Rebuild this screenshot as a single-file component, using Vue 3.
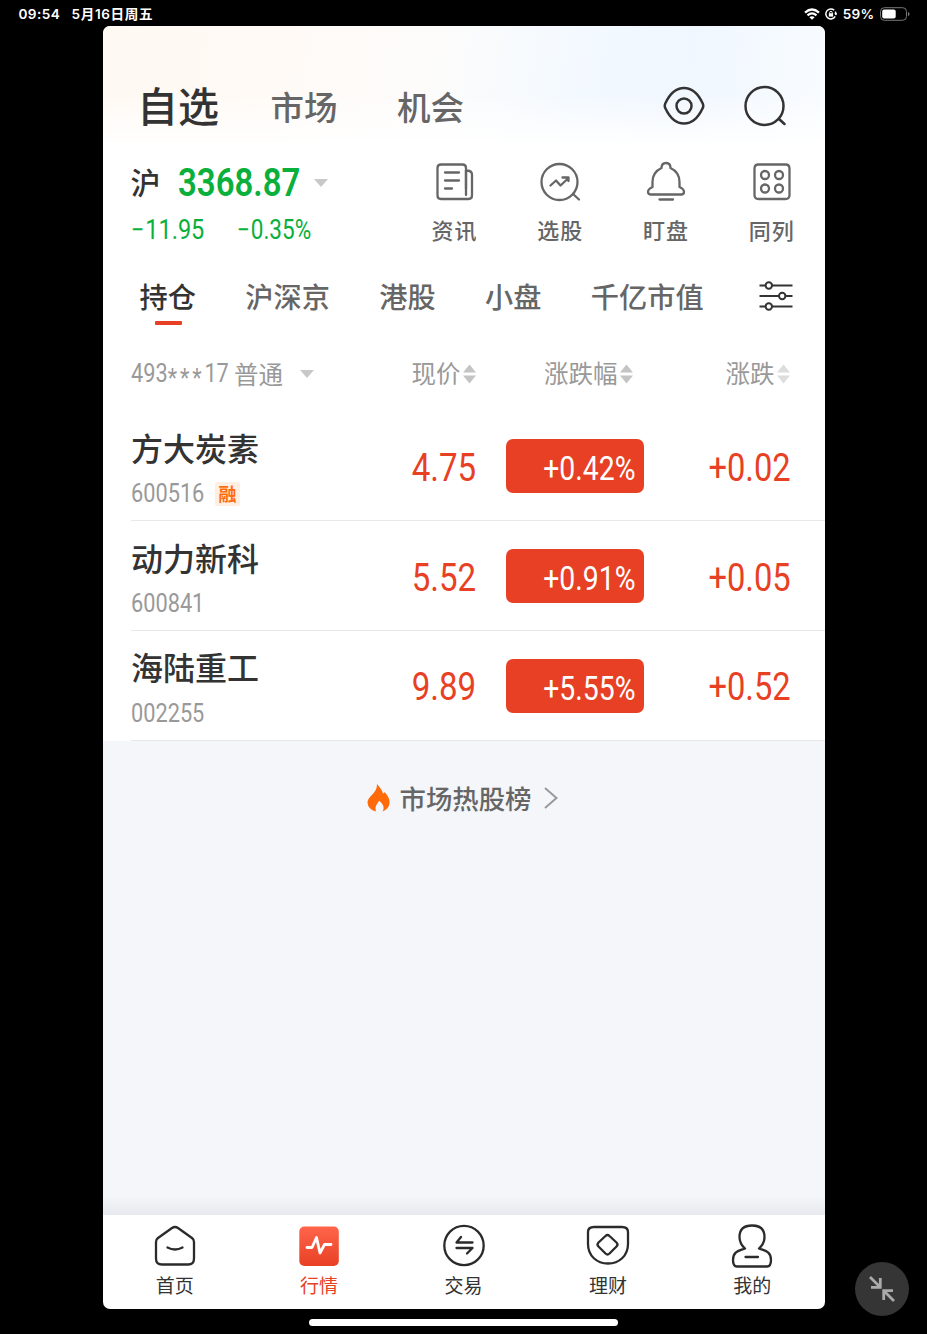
<template>
	<div class="screen">
		<div class="statusbar">
			<div class="clock"><span>09:54</span><span>5月16日周五</span></div>
			<div class="indicators">
				<svg width="16" height="12" viewBox="0 0 16 12" fill="none" stroke="#fff" stroke-width="2.2">
					<path d="M1 4.6Q8-1.6 15 4.6M3.5 7.4Q8 3.4 12.5 7.4" />
					<path d="M5.4 9.2Q8 7.2 10.6 9.2L8 11.8Z" fill="#fff" stroke="none" />
				</svg>
				<svg width="12" height="12" viewBox="0 0 12 12" fill="none" stroke="#fff" stroke-width="1.5">
					<path d="M9.2 2.2A5 5 0 1 0 10.2 8.4M10.7 7A5 5 0 0 0 10.3 3.6" />
					<path d="M9.2 5.2h3l-1.3 2z" fill="#fff" stroke="none" />
					<path d="M4.7 5.8V4.6a1.2 1.2 0 0 1 2.5 0V5.8" stroke-width="1" />
					<path d="M3.8 5.3h4.3v3.3H3.8z" fill="#fff" stroke="none" />
				</svg>
				<span class="percent">59%</span>
				<svg width="30" height="14" viewBox="0 0 30 14">
					<rect x=".5" y=".7" width="26" height="12.6" rx="3.8" fill="none" stroke="#777" />
					<rect x="2.2" y="2.5" width="13.5" height="9" rx="2" fill="#fff" />
					<path d="M28 5v4.2q1.6-.6 1.6-2.1T28 5z" fill="#777" />
				</svg>
			</div>
		</div>

		<main class="app">
			<header class="top">
				<nav class="sections">
					<span class="current">自选</span>
					<span>市场</span>
					<span>机会</span>
				</nav>
				<div class="tools">
					<svg width="42" height="42" viewBox="0 0 42 42" fill="none" stroke="#333" stroke-width="2.5">
						<path d="M2.5 18C7 8.500 13 3 21 3S35 8.500 39.500 18Q41 21 39.500 23.500C35 33 28 38.500 21 38.500S7 33 2.500 23.500Q1 21 2.500 18Z" />
						<circle cx="21" cy="21" r="7.500" />
					</svg>
					<svg width="42" height="42" viewBox="0 0 42 42" fill="none" stroke="#333" stroke-width="2.500" stroke-linecap="round">
						<circle cx="20.500" cy="21" r="19" />
						<path d="M35 34l5.500 5" />
					</svg>
				</div>
			</header>

			<section class="overview">
				<div class="index">
					<div class="line">
						<span class="market">沪</span>
						<span class="num point">3368.87</span>
						<i class="caret"></i>
					</div>
					<div class="line changes">
						<span class="num"><b>−</b>11.95</span>
						<span class="num"><b>−</b>0.35%</span>
					</div>
				</div>
				<div class="shortcuts">
					<div v-for="s in shortcuts" class="shortcut">
						<svg width="42" height="42" viewBox="0 0 42 42" fill="none" stroke="#666" stroke-width="2.3" stroke-linecap="round" stroke-linejoin="round">
							<path v-for="d in s.paths" :d="d" />
						</svg>
						<span>{{ s.name }}</span>
					</div>
				</div>
			</section>

			<nav class="groups">
				<span v-for="(g, i) in groups" :class="{ active: i === 0 }">{{ g }}</span>
				<svg width="34" height="30" viewBox="0 0 34 30" fill="none" stroke="#333" stroke-width="2">
					<path d="M.5 4.500H6.500M13 4.500H33.500M.5 15H20M26.500 15H33.500M.5 25.500H6.500M13 25.500H33.500" />
					<circle cx="9.800" cy="4.500" r="3.200" />
					<circle cx="23.200" cy="15" r="3.200" />
					<circle cx="9.800" cy="25.500" r="3.200" />
				</svg>
			</nav>

			<div class="thead">
				<div class="account">
					<span class="num">493<b>***</b>17</span><span>普通</span><i class="caret"></i>
				</div>
				<div v-for="c in columns" class="col">
					<span>{{ c }}</span>
					<svg width="13" height="20" viewBox="0 0 13 20"><path d="M6.500 .5l6.500 8H0zM6.500 19.500l6.500-8H0z" /></svg>
				</div>
			</div>

			<ul class="stocks">
				<li v-for="s in stocks">
					<div class="name">
						<strong>{{ s.name }}</strong>
						<div class="code"><span class="num">{{ s.code }}</span><em v-if="s.margin">融</em></div>
					</div>
					<div class="price"><span class="num">{{ s.price }}</span></div>
					<div class="rate"><span class="num">{{ s.rate }}</span></div>
					<div class="diff"><span class="num">{{ s.diff }}</span></div>
				</li>
			</ul>

			<div class="hot">
				<svg width="24" height="28" viewBox="0 0 24 28">
					<path d="M10 0C12.500 3 15 5.500 16 9.500Q17.500 9 17.500 8C21 12 23 15 22.500 19Q22 25 15.500 27.500Q19 22 12 16.500C12 19 7 21 9 27.500Q1 25.500 .500 18.500C.500 12 10.500 9.500 10 0Z" fill="#ff6a0a" />
				</svg>
				<span>市场热股榜</span>
				<svg width="14" height="22" viewBox="0 0 14 22" fill="none" stroke="#999" stroke-width="2"><path d="M1 1l11.500 10L1 21" /></svg>
			</div>

			<footer class="tabbar">
				<div class="tab">
					<svg viewBox="0 0 44 44"><path d="M3 18Q3 15.500 5 14L19 4Q22 2 25 4L39 14Q41 15.500 41 18V34.500Q41 40.500 35 40.500H9Q3 40.500 3 34.500ZM14.500 23.500Q22 27.500 29.500 23.500" /></svg>
					<span>首页</span>
				</div>
				<div class="tab on">
					<svg viewBox="0 0 44 44">
						<defs><linearGradient id="pulse" x2="0" y2="1"><stop stop-color="#ff654b" /><stop offset="1" stop-color="#e84024" /></linearGradient></defs>
						<rect x="2.300" y="2.500" width="39.500" height="39.500" rx="5" fill="url(#pulse)" stroke="none" />
						<path d="M10 23.500h5L19.500 13.500l3.500 15.500L27.500 20.500h6.500" stroke="#fff" stroke-width="2.800" />
					</svg>
					<span>行情</span>
				</div>
				<div class="tab">
					<svg viewBox="0 0 44 44"><circle cx="22" cy="21.500" r="19.700" /><path d="M30.500 18.500H14.500L19 13M14.500 24H30.500L25 29.500" /></svg>
					<span>交易</span>
				</div>
				<div class="tab">
					<svg viewBox="0 0 44 44"><path d="M8 3H36Q42 3 42 8V20C42 32 33 39.500 22 39.500S2 32 2 20V8Q2 3 8 3ZM19.500 12Q21.500 10 23.500 12L30.500 18.500Q32.500 20.500 30.500 22.500L23.500 29.500Q21.500 31.500 19.500 29.500L12.500 22.500Q10.500 20.500 12.500 18.500Z" /></svg>
					<span>理财</span>
				</div>
				<div class="tab">
					<svg viewBox="0 0 44 44"><path d="M15 24.500C11 21 9.500 17 9.500 13C9.500 5 14.500 1.500 22 1.500S34.500 5 34.500 13C34.500 17 33 21 29 24.500C34 26.500 41 27 41 36Q41 42.500 37 42.500H7Q3 42.500 3 36C3 27 10 26.500 15 24.500ZM15.500 33H28" /></svg>
					<span>我的</span>
				</div>
			</footer>
		</main>

		<div class="homebar"></div>
		<button class="shrink">
			<svg width="28" height="28" viewBox="0 0 28 28" fill="none" stroke="#aaa" stroke-width="2.800"><path d="M2 2l10 10M3 12.300H12.300V3M26 26L16 16M25 15.700H15.700V25" /></svg>
		</button>
	</div>
</template>

<script setup>
	const shortcuts = [
		{ name: '资讯', paths: ['M32 34V7Q32 3.500 28.500 3.500H7Q3.500 3.500 3.500 7V34.500Q3.500 38 7 38H34.500Q38 38 38 34.500V13.500Q38 9.500 32 9.500', 'M32 9.500V28', 'M11 11.500H25M11 19.500H25M11 27.500H18'] },
		{ name: '选股', paths: ['M2.500 21A18 18 0 1 1 38.500 21A18 18 0 1 1 2.500 21', 'M34 33l6 5.500', 'M11.500 24.500L17 19.500L21.500 24.500L29.500 17M23.500 16.500H29.500V20'] },
		{ name: '盯盘', paths: ['M16.500 7C16.500 4 18 2 21 2S25.500 4 25.500 7C32 10 34.500 15 34.500 21V26Q39 28 39 31Q39 33.500 36 33.500H6Q3 33.500 3 31Q3 28 7.500 26V21C7.500 15 10 10 16.500 7Z', 'M14.500 38.500H28'] },
		{ name: '同列', paths: ['M7.500 3.500H34.500Q38.500 3.500 38.500 7.500V34Q38.500 38 34.500 38H7.500Q3.500 38 3.500 34V7.500Q3.500 3.500 7.500 3.500Z', 'M10 14a4 4 0 1 1 8 0a4 4 0 1 1-8 0M24 14a4 4 0 1 1 8 0a4 4 0 1 1-8 0M10 27.500a4 4 0 1 1 8 0a4 4 0 1 1-8 0M24 27.500a4 4 0 1 1 8 0a4 4 0 1 1-8 0'] },
	];

	const groups = ['持仓', '沪深京', '港股', '小盘', '千亿市值'];
	const columns = ['现价', '涨跌幅', '涨跌'];

	const stocks = [
		{ name: '方大炭素', code: '600516', price: '4.75', rate: '+0.42%', diff: '+0.02', margin: true },
		{ name: '动力新科', code: '600841', price: '5.52', rate: '+0.91%', diff: '+0.05' },
		{ name: '海陆重工', code: '002255', price: '9.89', rate: '+5.55%', diff: '+0.52' },
	];
</script>

<style>
	body {
		background: #000;
	}
</style>

<style scoped>
	.screen {
		position: relative;
		width: 927px;
		height: 1334px;
		background: #000;
		overflow: hidden;
		font-family: "Noto Sans CJK SC", sans-serif;
		white-space: nowrap;
		color: #333;
	}

	svg { display: block; flex: none }

	.num {
		display: inline-block;
		font-family: Roboto, sans-serif;
		transform: scaleX(0.87);
		transform-origin: left center;
	}

	/* Status bar */
	.statusbar {
		height: 25.5px;
		box-sizing: border-box;
		padding: 2px 17px 0 18.5px;
		display: flex;
		justify-content: space-between;
		align-items: center;
		color: #fff;
		font: 600 13.6px/20px Inter, "Noto Sans CJK SC", sans-serif;
	}

	.clock { display: flex; gap: 11.5px; letter-spacing: 0.4px }
	.clock span + span { letter-spacing: 0.6px }
	.indicators { display: flex; align-items: center; gap: 5.5px }
	.percent { letter-spacing: 0.3px }

	/* App card */
	.app {
		width: 722px;
		height: 1283px;
		margin-left: 102.5px;
		border-radius: 7px;
		overflow: hidden;
		background: #fff;
		display: flex;
		flex-direction: column;
	}

	.top {
		height: 123px;
		box-sizing: border-box;
		padding: 38px 39px 0 34.500px;
		display: flex;
		justify-content: space-between;
		align-items: center;
		background: linear-gradient(180deg, transparent 55%, #fff 98%), linear-gradient(100deg, #fff9f3 0%, #fffaf6 25%, #fdfcfb 45%, #f3f9ff 65%, #f0f7ff 80%, #f9fcff 100%);
	}

	.sections { display: flex; align-items: center; font-size: 33.5px; font-weight: 500; color: #666 }
	.sections span { width: 126.500px; line-height: 48px }
	.sections .current { font-size: 41px; color: #333; width: 133.500px; margin-top: -4px }

	.tools { display: flex; gap: 38.500px }

	.overview {
		height: 117px;
		display: flex;
		padding-left: 28px;
	}

	.index { width: 272px; padding-top: 14px }
	.line { display: flex; align-items: center; height: 40px }
	.market { font-size: 30px; font-weight: 500; width: 47.500px; line-height: 37px; margin-top: -3px }
	.point { width: 135.500px; font-size: 39px; font-weight: 600; color: #0aaf3c; transform: scaleX(0.845) }

	.caret {
		border: 7.500px solid transparent;
		border-top: 8px solid #c8c8c8;
		border-bottom: 0;
	}

	.changes { height: 55px; color: #0aaf3c; font-size: 27px }
	.changes .num { width: 106px }
	.changes .num + .num { transform: scaleX(0.835) }
	.changes b { font-weight: 400; margin-right: 1px }

	.shortcuts { display: flex; padding-top: 12px }
	.shortcut { width: 105.700px; display: flex; flex-direction: column; align-items: center }
	.shortcut span { font-size: 22px; letter-spacing: 1px; line-height: 32px; margin-top: 10.500px; color: #666; font-weight: 500 }

	.groups {
		height: 64px;
		box-sizing: border-box;
		padding: 0 31.500px 3px 37px;
		display: flex;
		justify-content: space-between;
		align-items: center;
		font-size: 28.200px;
		font-weight: 500;
		color: #666;
	}

	.groups span { line-height: 60px }
	.groups svg { margin-left: 6px }

	.groups .active {
		position: relative;
		color: #333;
	}

	.active::after {
		content: "";
		position: absolute;
		left: 15px;
		bottom: 1.500px;
		width: 27px;
		height: 3.500px;
		border-radius: 1px;
		background: #e84024;
	}

	.thead {
		height: 82px;
		padding: 6px 0 0 28.500px;
		box-sizing: border-box;
		display: flex;
		align-items: center;
		color: #999;
		font-size: 24.500px;
	}

	.account { width: 188px; display: flex; align-items: center }
	.account .num { width: 103px; font-size: 25px }
	.account .num b { display: inline-block; font-weight: 400; letter-spacing: 3.300px; line-height: 20px; vertical-align: -5px }
	.account .caret { margin-left: 17px }
	.col { display: flex; align-items: center; justify-content: flex-end; width: 157px; gap: 2.500px; fill: #c4c4c4 }
	.col span { margin-top: -2px }
	.col:last-child { fill: #ddd }

	.stocks { margin: 0; padding: 0 0 0 28.500px; list-style: none }

	.stocks li {
		height: 109.800px;
		box-sizing: border-box;
		padding-top: 1px;
		border-bottom: 1px solid #e8e8e8;
		display: flex;
		align-items: center;
	}

	.name { width: 247px; padding-top: 6px }
	.name strong { display: block; font-size: 32px; font-weight: 500; line-height: 44px }
	.code { display: flex; align-items: center; height: 40px; margin-top: 5px; color: #999 }
	.code .num { width: 84px; font-size: 25px }

	.code em {
		width: 25px;
		height: 24px;
		border-radius: 2px;
		background: #ffefe3;
		color: #ff6a0a;
		font: 700 18px/23px "Noto Sans CJK SC", sans-serif;
		text-align: center;
	}

	.price, .diff { text-align: right; font-size: 38px; color: #e84024; padding-bottom: 4px }
	.price .num, .rate .num, .diff .num { transform-origin: right center }
	.price { width: 98px }
	.diff { width: 146.500px }
	.diff .num { transform: scaleX(0.86) }

	.rate {
		width: 138px;
		height: 54px;
		margin-left: 30px;
		padding-right: 9px;
		box-sizing: border-box;
		border-radius: 7px;
		background: #e84024;
		color: #fff;
		font-size: 34px;
		line-height: 53px;
		text-align: right;
	}

	.rate .num { transform: scaleX(0.835) }

	.hot {
		flex: 1;
		padding: 38px 2px 0 0;
		display: flex;
		justify-content: center;
		align-items: flex-start;
		background: linear-gradient(0deg, #e9eaef, #f4f6fa 20px);
		color: #666;
		font-size: 26.400px;
		font-weight: 500;
		line-height: 38px;
	}

	.hot svg { margin-top: 5px }
	.hot svg:last-child { margin-top: 8px }
	.hot span { margin: 0 13px 0 9px }

	.tabbar {
		height: 94px;
		display: flex;
	}

	.tab { flex: 1; display: flex; flex-direction: column; align-items: center; padding-top: 9px; font-size: 19px; line-height: 28px }
	.tab svg { width: 44px; height: 44px; fill: none; stroke: #2b2b2b; stroke-width: 2.300; stroke-linecap: round; stroke-linejoin: round }
	.tab span { margin-top: 3px }
	.on { color: #e84024 }

	.homebar {
		width: 309px;
		height: 6.500px;
		margin: 10.500px auto 0;
		border-radius: 4px;
		background: #fff;
	}

	.shrink {
		position: absolute;
		right: 18px;
		bottom: 18px;
		width: 54px;
		height: 54px;
		padding: 0;
		border: 0;
		border-radius: 50%;
		background: #353535;
		display: flex;
		align-items: center;
		justify-content: center;
	}
</style>
